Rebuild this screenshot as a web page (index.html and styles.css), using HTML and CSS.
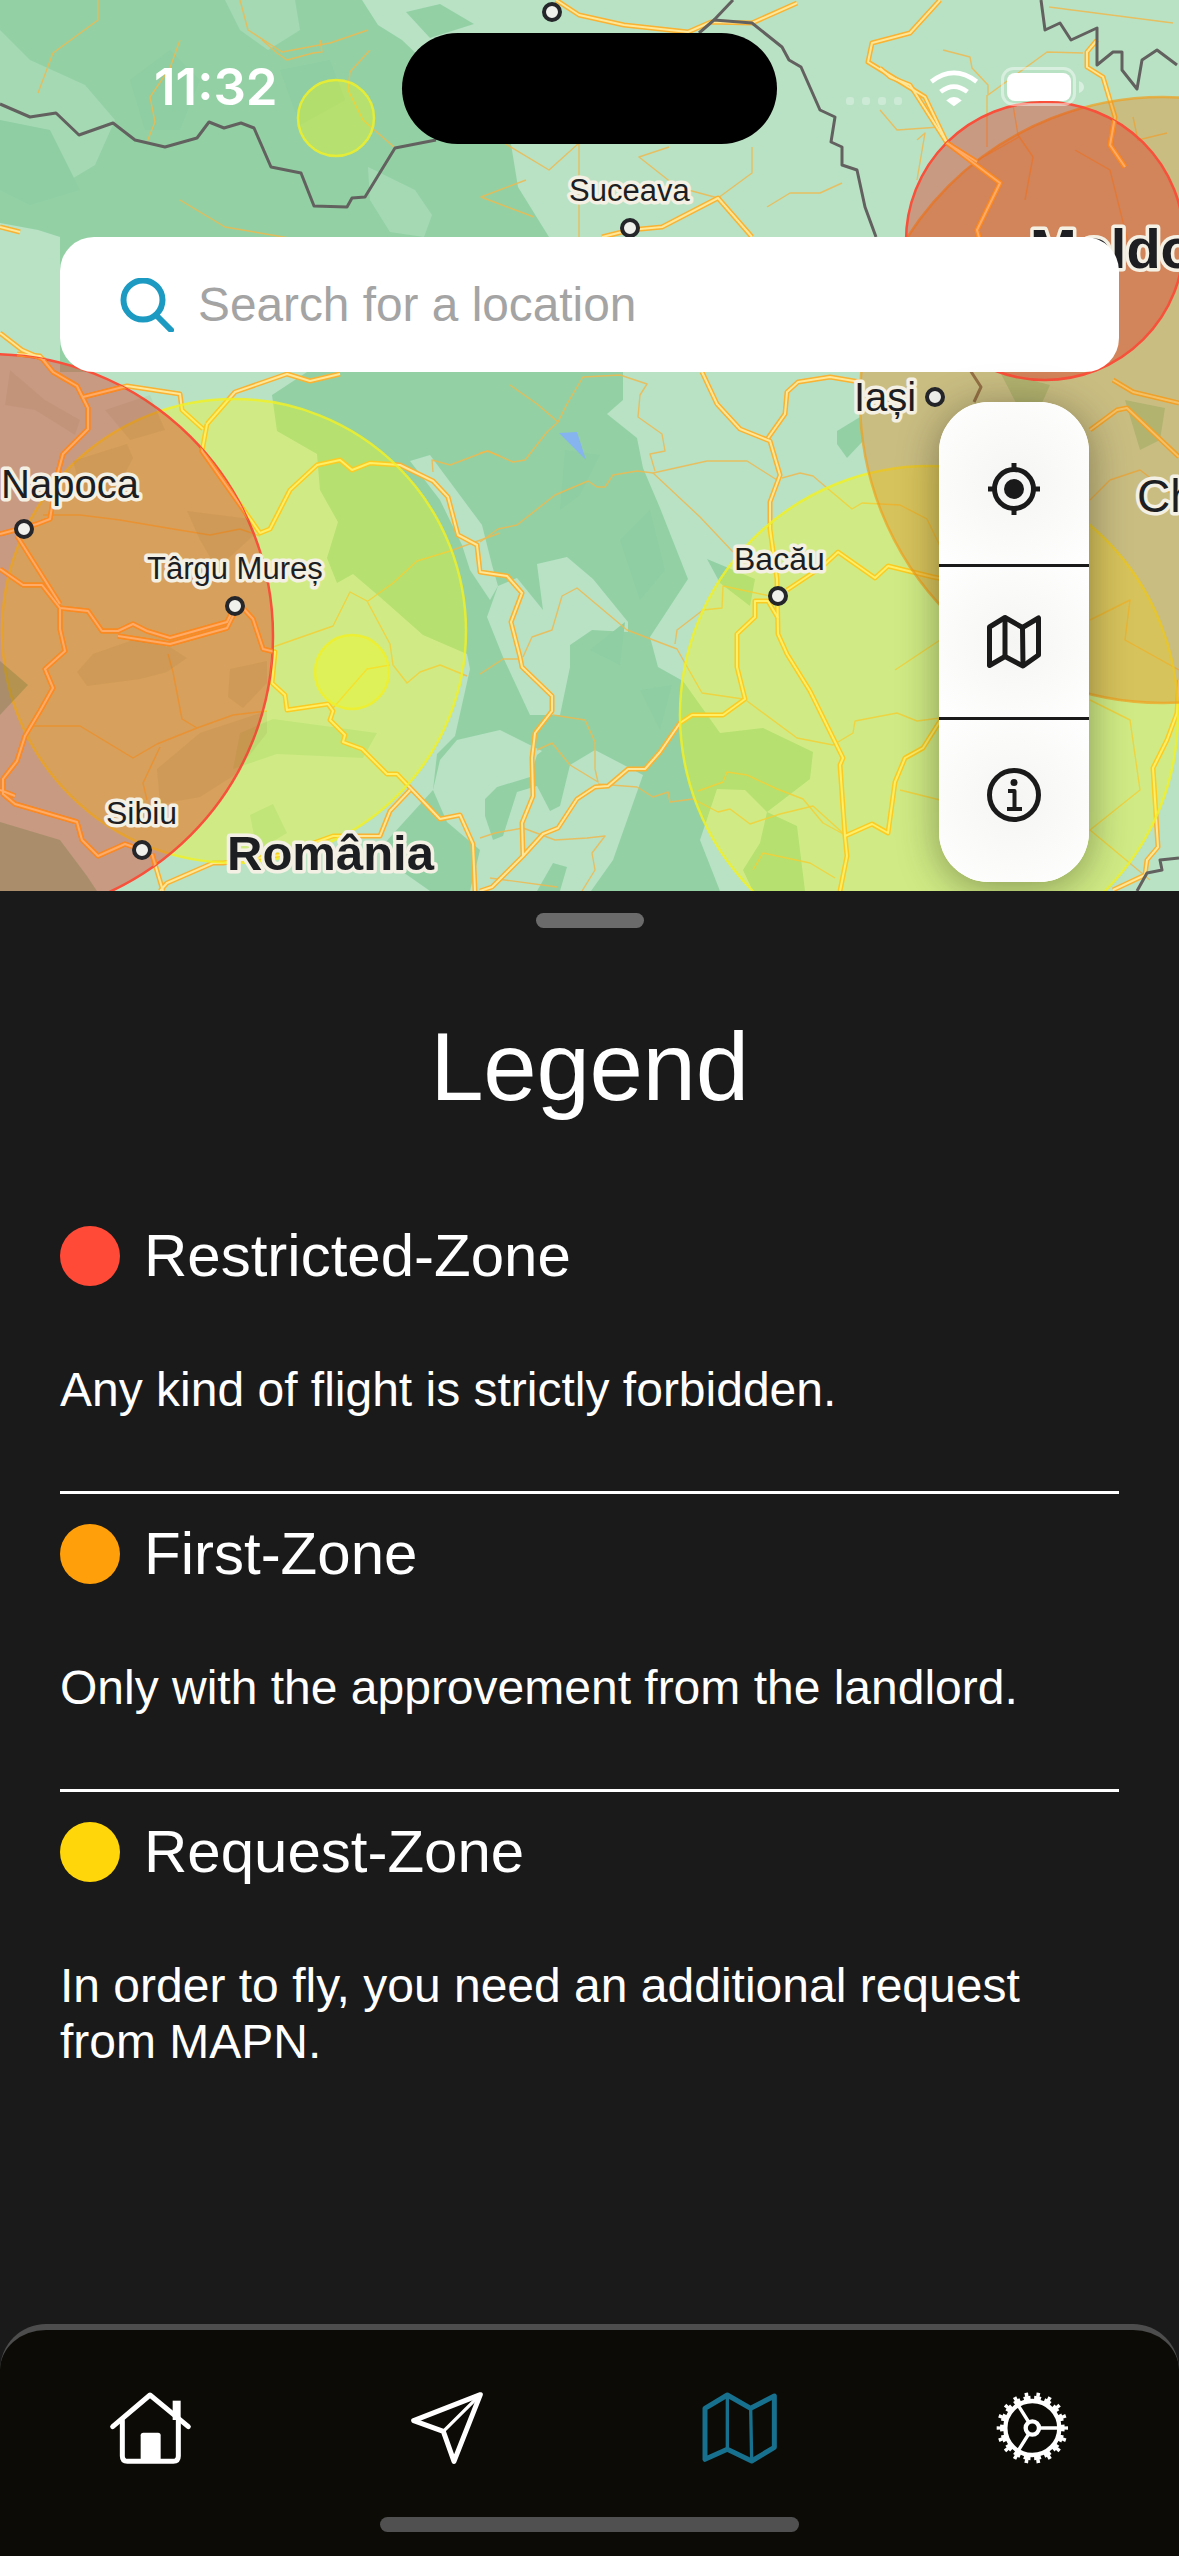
FILE: index.html
```html
<!DOCTYPE html>
<html lang="en">
<head>
<meta charset="utf-8">
<title>Legend</title>
<link rel="stylesheet" href="styles.css">
</head>
<body>
<div class="phone">
  <section class="map">
    <svg class="map-canvas" viewBox="0 0 1179 891" width="1179" height="891">
      <defs>
        <clipPath id="red-zones">
          <circle cx="-9" cy="636" r="282"/>
          <circle cx="1045" cy="241" r="139"/>
        </clipPath>
        <g id="majors">
          <polyline points="556,0 579,15 624,25 688,32 711,22 752,23 797,3"/>
          <polyline points="940,0 910,33 872,43 868,62 925,97 947,143 977,162"/>
          <polyline points="880,68 890,77 910,85 947,143 1000,183 977,230 985,260"/>
          <polyline points="1097,40 1087,52 1087,67 1103,77 1115,117 1110,145 1125,167"/>
          <polyline points="602,237 630,230 662,227 718,198 752,237"/>
          <polyline points="0,227 20,232"/>
          <polyline points="0,333 22,350 45,360"/>
          <polyline points="17,354 40,356 53,372 77,386 88,408 88,429 63,454 57,476 50,519 37,524 0,534"/>
          <polyline points="83,397 127,386 180,394 182,410 203,429"/>
          <polyline points="207,424 235,392 287,374 310,381 340,374"/>
          <polyline points="207,424 202,451 260,533 270,529 290,490 317,465 340,460 352,470 370,463 400,465 433,481 448,497 458,535 477,545 480,572 507,576 522,593 511,622 520,657 522,667 552,696 552,711 535,733 532,758 533,796 522,823 523,856 492,887 480,891"/>
          <polyline points="523,856 543,834 558,828 577,799 595,787 608,786 628,769 645,769 660,752 680,723 692,715 723,715 745,699 737,667 737,634 755,617 755,601 768,601 778,618"/>
          <polyline points="702,372 717,404 740,429 770,441 780,475 770,502 770,529 777,579 778,634 787,654 810,691 843,758 840,765 845,836 847,856 840,891"/>
          <polyline points="768,438 785,414 787,392 798,382 830,377 860,382"/>
          <polyline points="787,590 823,566 838,552 875,578 888,566 933,577 1000,590"/>
          <polyline points="845,836 872,824 888,833 895,782 905,758 923,748 940,721 1000,680"/>
          <polyline points="1090,430 1117,410 1127,408 1179,457"/>
          <polyline points="1113,380 1133,392 1179,403"/>
          <polyline points="1179,680 1177,713 1167,740 1153,768 1158,847 1147,860 1145,875 1113,890"/>
          <polyline points="0,569 23,585 42,585 60,608 88,611 102,631 118,631 133,624 147,631 170,638 227,622 235,606"/>
          <polyline points="118,636 170,644 227,628 235,612"/>
          <polyline points="60,608 60,629 65,651 45,669 53,688 40,711 25,736 17,761 3,779 3,794 15,804 77,822 82,840 98,856 125,844 142,850"/>
          <polyline points="0,790 15,796"/>
          <polyline points="17,536 60,604"/>
          <polyline points="243,608 253,619 263,649 275,652 272,683 285,695 287,710 328,704 333,711 330,720 345,735 343,742 362,749 387,774 397,774 440,819 460,815 473,844 475,891"/>
          <polyline points="410,790 390,811 380,836 333,836 280,855 223,863 213,863 167,883 160,891"/>
          <polyline points="152,854 163,891"/>
        </g>
      </defs>

      <rect class="land" width="1179" height="891"/>

      <polygon class="forest" points="0,0 362,0 378,25 402,40 511,144 518,187 549,237 600,300 623,372 623,400 607,414 637,438 643,468 660,508 688,579 650,637 658,667 683,681 720,733 763,728 813,752 810,779 767,812 797,826 805,891 430,891 400,870 383,845 433,790 437,754 455,736 470,669 467,654 423,635 380,597 353,574 337,583 327,558 338,522 320,490 317,454 277,431 272,395 307,372 60,372 60,237 38,230 0,223"/>
      <polygon class="land" points="410,461 430,455 482,525 492,565 498,586 490,600 470,570 462,545 440,500"/>
      <polygon class="land" points="537,564 567,557 593,579 628,622 628,632 592,630 570,645 570,667 560,715 530,715 503,657 487,617 498,586 517,578 543,610"/>
      <polygon class="land" points="457,740 500,730 530,745 570,765 595,750 643,775 613,860 591,891 470,891 480,850 447,822 433,790 440,760"/>
      <polygon class="land" points="717,789 745,790 767,812 760,843 743,870 753,891 720,891 700,840"/>
      <polygon class="forest" points="485,799 497,787 530,777 537,755 552,743 570,765 560,806 550,811 537,786 517,792 503,836 493,840 485,816"/>
      <polygon class="forest" points="537,891 553,863 567,867 560,891"/>
      <polygon class="forest" points="707,559 755,579 750,606 720,583"/>
      <polygon class="forest" points="837,431 860,417 863,441 847,458 837,444"/>
      <polygon class="forest" points="406,12 440,4 474,24 430,38"/>

      <polygon class="forest-light" points="0,30 30,60 85,85 115,120 95,165 45,195 25,170 0,150"/>
      <polygon class="forest-light" points="225,0 295,0 300,30 268,50 240,30"/>
      <polygon class="forest-light" points="368,167 415,190 432,215 424,237 390,232 370,200"/>
      <polygon class="forest-dark" points="130,80 170,50 200,80 180,130 145,130"/>
      <polygon class="forest-dark" points="280,70 330,60 345,100 300,125"/>
      <polygon class="forest-dark" points="0,120 50,130 80,190 30,205 0,190"/>
      <polygon class="forest-dark" points="590,650 625,622 620,665"/>
      <polygon class="forest-dark" points="620,540 650,510 665,570 640,600"/>
      <polygon class="forest-dark" points="565,450 600,455 580,495 560,510"/>
      <polygon class="forest-dark" points="640,690 672,685 660,730"/>
      <polygon class="forest-light" points="240,733 273,719 377,733 363,758 277,754 233,769"/>
      <polygon class="forest-light" points="250,815 273,804 287,833 257,851"/>
      <polygon class="forest" points="1000,372 1050,385 1030,430"/>
      <polygon class="forest" points="1125,400 1165,408 1160,440 1140,450"/>
      <polygon class="lake" points="559,433 577,432 586,460"/>

      <g class="minor">
        <polyline points="480,453 488,451 513,462 525,460 547,432 558,422 537,404 510,385"/>
        <polyline points="558,422 567,404 583,377 620,375 647,384 640,395 638,417 662,434 665,451 650,454 655,471"/>
        <polyline points="653,473 707,461 747,461 777,480"/>
        <polyline points="653,473 700,517 733,552"/>
        <polyline points="480,542 498,529 517,525 555,495 588,481 597,487 605,487 613,475 637,471 653,473"/>
        <polyline points="782,478 800,473 813,476 827,488 852,509 862,503 900,505 927,519 940,546"/>
        <polyline points="523,657 532,637 552,630 562,596 577,588 627,630 677,649 702,693 743,699"/>
        <polyline points="675,644 677,630 703,610 722,608 723,586 770,596"/>
        <polyline points="480,674 503,659 522,659"/>
        <polyline points="553,715 585,720 595,742 595,769 598,782 570,765 552,743 537,750"/>
        <polyline points="598,784 637,787 653,797 668,792 670,802 693,799 718,812 730,809 750,824 780,814 813,806 845,835"/>
        <polyline points="747,701 797,738 833,745 853,733 855,721 897,713 917,721 940,718"/>
        <polyline points="698,791 723,782 727,772 747,775 777,789 803,799 823,823 845,835"/>
        <polyline points="480,838 495,833 523,828 555,840 587,838 605,836 592,853 595,870 582,891"/>
        <polyline points="490,878 557,887"/>
        <polyline points="753,870 763,853 810,863 835,878"/>
        <polyline points="43,515 80,515 120,520 173,529 210,535 240,529 260,536"/>
        <polyline points="168,654 173,672 182,719 197,728 233,715 267,711"/>
        <polyline points="33,726 80,726 133,758 157,744 197,728"/>
        <polyline points="160,747 143,783 147,800"/>
        <polyline points="273,647 333,626 350,592 367,601 390,644 393,665 407,683 420,672 440,665 467,676"/>
        <polyline points="368,601 393,583 417,561 450,551 500,533"/>
        <polyline points="333,708 367,669 390,665"/>
        <polyline points="433,472 432,460 450,465 487,451 500,456"/>
        <polyline points="38,93 53,53 98,20 98,0"/>
        <polyline points="240,0 248,30 282,52 330,43 368,30"/>
        <polyline points="180,40 170,68 150,97 155,122 147,142"/>
        <polyline points="262,40 277,53 287,60 313,53 322,52 320,40"/>
        <polyline points="370,50 350,72 348,90 363,120 395,148"/>
        <polyline points="180,200 225,227 301,240"/>
        <polyline points="526,180 481,197 534,217"/>
        <polyline points="504,143 549,170 579,143 579,237"/>
        <polyline points="669,147 639,157 677,187 718,198 752,173 752,147"/>
        <polyline points="767,207 790,193 820,193 842,183"/>
        <polyline points="943,50 970,57 972,68 988,85 988,95 1047,52 1083,53"/>
        <polyline points="880,110 897,130 940,127"/>
        <polyline points="917,140 925,133 917,180"/>
        <polyline points="987,95 987,147"/>
        <polyline points="1013,105 1018,135 1033,157 1025,200"/>
        <polyline points="1019,137 978,160"/>
        <polyline points="1133,117 1138,140 1167,133"/>
        <polyline points="1049,7 1173,23"/>
        <polyline points="1075,150 1110,170 1130,250"/>
        <polyline points="1090,500 1110,480 1140,470 1179,500"/>
        <polyline points="1090,620 1130,600 1125,640 1179,670"/>
        <polyline points="1090,700 1130,720 1140,790 1090,830 1150,880"/>
        <polyline points="895,670 940,640"/>
        <polyline points="900,790 940,800"/>
      </g>

      <use href="#majors" class="road-casing"/>
      <use href="#majors" class="road-fill"/>

      <polyline class="border" points="0,104 30,117 56,113 79,135 113,123 135,140 165,147 197,138 209,122 224,128 241,123 254,128 271,167 301,173 314,206 347,207 352,198 365,197 395,148 436,140"/>
      <polyline class="border" points="699,33 714,20 752,23 782,47 789,60 801,67 820,110 835,117 831,142 842,147 842,165 857,170 865,207 876,237"/>
      <polyline class="border" points="714,20 733,0"/>
      <polyline class="border" points="970,370 981,387 974,402"/>
      <polyline class="border" points="1041,0 1045,30 1060,23 1071,40 1097,28 1097,65 1113,52 1122,52 1122,70 1137,89 1142,60 1157,50 1177,65"/>
      <polyline class="border" points="1137,891 1147,873 1162,870 1160,860 1179,858"/>

      <circle class="zone-yellow" cx="234" cy="631" r="232"/>
      <circle class="zone-yellow" cx="929" cy="715" r="249"/>
      <circle class="zone-yellow" cx="336" cy="118" r="38"/>
      <circle class="zone-yellow" cx="352" cy="672" r="37"/>
      <circle class="zone-orange" cx="1163" cy="400" r="303"/>
      <circle class="zone-red" cx="-9" cy="636" r="282"/>
      <circle class="zone-red" cx="1045" cy="241" r="139"/>

      <g clip-path="url(#red-zones)">
        <use href="#majors" class="road-hot"/>
        <use href="#majors" class="road-hot-core"/>
      </g>

      <polygon class="tint-strong" points="0,822 60,840 87,876 97,891 0,891"/>
      <polygon class="tint-strong" points="0,661 28,685 0,715"/>
      <polygon class="tint" points="10,370 45,400 80,420 75,435 35,410 5,405"/>
      <polygon class="tint" points="105,410 150,395 165,430 130,440"/>
      <polygon class="tint" points="73,461 127,444 133,458 113,497 83,497"/>
      <polygon class="tint" points="187,511 250,519 253,536 217,569 200,540"/>
      <polygon class="tint" points="77,672 93,654 133,640 170,647 187,658 167,672 140,679 87,686"/>
      <polygon class="tint" points="230,669 267,661 267,683 243,708 228,697"/>
      <polygon class="tint" points="157,769 200,733 267,711 267,733 233,776 200,797 160,804"/>

      <g class="pins">
        <circle cx="552" cy="12" r="8"/>
        <circle cx="630" cy="228" r="8"/>
        <circle cx="935" cy="397" r="8"/>
        <circle cx="24" cy="529" r="8"/>
        <circle cx="235" cy="606" r="8"/>
        <circle cx="142" cy="850" r="8"/>
        <circle cx="778" cy="596" r="8"/>
      </g>

      <text class="city" x="569" y="201">Suceava</text>
      <text class="city city-m" x="854" y="411">Iași</text>
      <text class="city city-m" x="1" y="498">Napoca</text>
      <text class="city" x="147" y="579">Târgu Mureș</text>
      <text class="city city-s" x="106" y="824">Sibiu</text>
      <text class="city city-s" x="734" y="570">Bacău</text>
      <text class="country" x="227" y="870">România</text>
      <text class="country country-l" x="1030" y="268">Moldova</text>
      <text class="city city-l" x="1137" y="512">Chișinău</text>
    </svg>

    <div class="time">11:32</div>
    <div class="island"></div>
    <div class="status-right">
      <svg class="signal" viewBox="0 0 56 8" width="56" height="8"><rect width="8" height="8" rx="3"/><rect x="16" width="8" height="8" rx="3"/><rect x="32" width="8" height="8" rx="3"/><rect x="48" width="8" height="8" rx="3"/></svg>
      <svg class="wifi" viewBox="135 85 160 115" width="53" height="38">
        <path class="wifi-arc" d="M145 123Q213 70 282 123"/>
        <path class="wifi-arc" d="M173 154Q213 122 254 154"/>
        <path class="wifi-dot" d="M190 180Q213 160 237 180L213 198Z"/>
      </svg>
      <svg class="battery" viewBox="0 0 84 40" width="84" height="40">
        <rect class="battery-case" x="1.5" y="1.5" width="72" height="36" rx="11"/>
        <rect class="battery-level" x="6" y="6" width="64" height="28" rx="8"/>
        <path class="battery-nub" d="M78 14q5 2 5 6t-5 6z"/>
      </svg>
    </div>

    <div class="search">
      <svg class="search-icon" viewBox="0 0 54 54" width="54" height="54">
        <circle cx="23" cy="22" r="19.5"/>
        <line x1="37" y1="38" x2="51" y2="52"/>
      </svg>
      <span class="search-text">Search for a location</span>
    </div>

    <div class="tools">
      <div class="tool tool-first">
        <svg class="tool-icon" viewBox="0 0 54 54" width="54" height="54">
          <circle cx="27" cy="27" r="19.5"/>
          <circle class="solid" cx="27" cy="27" r="10"/>
          <path d="M27 1v6M27 47v6M1 27h6M47 27h6"/>
        </svg>
      </div>
      <div class="tool">
        <svg class="tool-icon" viewBox="0 0 54 54" width="54" height="54">
          <path d="M2.500 12 18 2.500 35.500 12.500 51.500 3V40L36 51 18 41.500 2.500 50.500Z"/>
          <path d="M18 2.500V41.500M35.500 12.500 36 51"/>
        </svg>
      </div>
      <div class="tool tool-last">
        <svg class="tool-icon" viewBox="0 0 54 54" width="54" height="54">
          <circle cx="27" cy="27" r="24.500"/>
          <circle class="solid" cx="27" cy="14.500" r="3.500"/>
          <path class="thin" d="M21 23H27.500V40M20 41H35"/>
        </svg>
      </div>
    </div>
  </section>

  <section class="sheet">
    <div class="handle"></div>
    <h1 class="title">Legend</h1>
    <div class="zone">
      <div class="zone-head"><span class="dot dot-red"></span><h2 class="zone-name">Restricted-Zone</h2></div>
      <p class="zone-text">Any kind of flight is strictly forbidden.</p>
    </div>
    <div class="zone">
      <div class="zone-head"><span class="dot dot-orange"></span><h2 class="zone-name">First-Zone</h2></div>
      <p class="zone-text">Only with the approvement from the landlord.</p>
    </div>
    <div class="zone zone-last">
      <div class="zone-head"><span class="dot dot-yellow"></span><h2 class="zone-name">Request-Zone</h2></div>
      <p class="zone-text">In order to fly, you need an additional request from MAPN.</p>
    </div>

    <nav class="tabs">
      <div class="tab">
        <svg class="tab-icon" viewBox="36 57 270 240" width="90" height="80">
          <path d="M68 170 180 75 295 170"/>
          <path class="thick" d="M260 92V150"/>
          <path d="M97 152V258Q97 274 112 274H250Q265 274 265 258V150"/>
          <path class="fill" d="M152 196Q152 188 160 188H204Q212 188 212 196V272H152Z"/>
        </svg>
      </div>
      <div class="tab">
        <svg class="tab-icon" viewBox="921 57 270 240" width="90" height="80">
          <path d="M1171 74 971 152 1060 184 1092 274Z"/>
          <path class="thin" d="M1171 74 1060 184"/>
        </svg>
      </div>
      <div class="tab tab-active">
        <svg class="tab-icon" viewBox="36 57 270 240" width="90" height="80">
          <path d="M75 115 142 75 212 115 283 78V232L215 273 142 238 75 268Z"/>
          <path class="thin" d="M142 75V238M212 115 215 273"/>
        </svg>
      </div>
      <div class="tab">
        <svg class="tab-icon" viewBox="921 57 270 240" width="90" height="80">
          <circle class="teeth-base" cx="1057" cy="174" r="90" pathLength="360"/>
          <circle class="teeth-tip" cx="1057" cy="174" r="101" pathLength="360"/>
          <circle class="ring" cx="1057" cy="174" r="81"/>
          <circle class="ring" cx="1057" cy="174" r="20"/>
          <path class="thin" d="M1077 174H1140M1046 156 1011 100M1046 192 1012 246"/>
        </svg>
      </div>
    </nav>
    <div class="home-bar"></div>
  </section>
</div>
</body>
</html>
```

FILE: styles.css
```css
* { box-sizing: border-box; }

html, body { margin: 0; padding: 0; background: #1a1a1a; }

.phone {
  width: 1179px;
  height: 2556px;
  display: flex;
  flex-direction: column;
  overflow: hidden;
  font-family: "Liberation Sans", Arial, sans-serif;
  color: #fff;
}

/* map */
.map { position: relative; height: 891px; flex: none; overflow: hidden; }
.map-canvas { display: block; }

.land { fill: #b9e2c5; }
.forest { fill: #93d1a5; }
.forest-light { fill: #a5d9b4; }
.forest-dark { fill: #8ecea2; }
.lake { fill: #85b4ee; }
.tint { fill: rgba(110, 85, 30, 0.07); }
.tint-strong { fill: rgba(90, 110, 50, 0.28); }

.minor polyline { fill: none; stroke: #efb94f; stroke-width: 1.4; stroke-linejoin: round; opacity: 0.85; }
.road-casing { fill: none; stroke: #f9b232; stroke-width: 5; stroke-linejoin: round; }
.road-fill { fill: none; stroke: #ffe797; stroke-width: 2; stroke-linejoin: round; }
.road-hot { fill: none; stroke: #fb8a23; stroke-width: 5; stroke-linejoin: round; }
.road-hot-core { fill: none; stroke: #ffab68; stroke-width: 2; stroke-linejoin: round; }
.border { fill: none; stroke: #62615f; stroke-width: 3; stroke-linejoin: round; }

.zone-yellow { fill: rgba(255, 255, 0, 0.325); stroke: rgba(240, 240, 40, 0.85); stroke-width: 2.5; }
.zone-orange { fill: rgba(225, 134, 30, 0.4); stroke: rgba(240, 160, 30, 0.7); stroke-width: 2.5; }
.zone-red { fill: rgba(225, 48, 30, 0.4); stroke: #f8503a; stroke-width: 2.5; }

.pins circle { fill: #f0f0ec; stroke: #24262a; stroke-width: 4; }

.city, .country {
  font-family: "Liberation Sans", Arial, sans-serif;
  fill: #1c1e22;
  stroke: #f4f0e4;
  stroke-linejoin: round;
  paint-order: stroke;
}
.city { font-size: 31px; stroke-width: 7px; }
.city-s { font-size: 32px; }
.city-m { font-size: 40px; }
.city-l { font-size: 46px; }
.country { font-size: 49px; font-weight: 700; stroke-width: 7px; }
.country-l { font-size: 56px; }

/* status bar */
.time {
  position: absolute;
  left: 154px;
  top: 57px;
  font-family: Inter, "Liberation Sans", sans-serif;
  font-size: 51px;
  line-height: 60px;
  font-weight: 600;
  color: #fff;
}
.island {
  position: absolute;
  left: 402px;
  top: 33px;
  width: 375px;
  height: 111px;
  border-radius: 56px;
  background: #000;
}
.status-right {
  position: absolute;
  left: 846px;
  top: 67px;
  display: flex;
  align-items: flex-start;
}
.signal { fill: rgba(255, 255, 255, 0.28); margin-top: 30px; margin-right: 26px; }
.wifi { margin-right: 20px; margin-top: 2px; }
.wifi-arc { fill: none; stroke: #fff; stroke-width: 14; stroke-linecap: butt; }
.wifi-dot { fill: #fff; }
.battery-case { fill: none; stroke: rgba(255, 255, 255, 0.45); stroke-width: 3; }
.battery-level { fill: #fff; }
.battery-nub { fill: rgba(255, 255, 255, 0.45); }

/* search */
.search {
  position: absolute;
  left: 60px;
  top: 237px;
  width: 1059px;
  height: 135px;
  padding-left: 60px;
  display: flex;
  align-items: center;
  gap: 24px;
  background: #fff;
  border-radius: 34px;
}
.search-icon { fill: none; stroke: #1c9ac2; stroke-width: 6; stroke-linecap: round; }
.search-text { font-size: 47.800px; line-height: 56px; color: #a4a4a4; }

/* map tools */
.tools {
  position: absolute;
  left: 939px;
  top: 402px;
  z-index: 1;
  width: 150px;
  height: 480px;
  display: flex;
  flex-direction: column;
  border-radius: 50px;
  overflow: hidden;
  background: #fff;
}
.map::after {
  content: "";
  position: absolute;
  left: 939px;
  top: 402px;
  width: 150px;
  height: 480px;
  border-radius: 50px;
  box-shadow: 0 6px 40px rgba(20, 20, 10, 0.4);
  pointer-events: none;
}
.tool {
  flex: none;
  height: 150px;
  display: flex;
  align-items: center;
  justify-content: center;
  background: radial-gradient(circle, #f5f5f3 0, #fbfbfa 60%, #fff 100%);
}
.tool + .tool { border-top: 3px solid #1a1a1a; height: 153px; }
.tool-first { height: 162px; padding-top: 12px; }
.tool + .tool-last { height: 165px; padding-bottom: 13px; }
.tool-icon { fill: none; stroke: #1a1a1a; stroke-width: 5; stroke-linejoin: round; }
.tool-icon .solid { fill: #1a1a1a; stroke: none; }
.tool-icon .thin { stroke-width: 4; }

/* sheet */
.sheet {
  flex: 1;
  position: relative;
  display: flex;
  flex-direction: column;
  background: #1a1a1a;
  padding-top: 22px;
}
.handle {
  align-self: center;
  width: 108px;
  height: 15px;
  border-radius: 8px;
  background: #6b6b6b;
}
.title {
  margin: 84px 0 74px;
  font-size: 96px;
  line-height: 110px;
  font-weight: 400;
  letter-spacing: -0.3px;
  text-align: center;
}
.zone {
  margin: 0 60px;
  padding: 30px 0 73px;
  border-bottom: 3px solid #fff;
}
.zone-last { border-bottom: 0; }
.zone-head { display: flex; align-items: center; gap: 24px; height: 60px; }
.dot { width: 60px; height: 60px; border-radius: 50%; flex: none; }
.dot-red { background: #ff4a37; }
.dot-orange { background: #ff9f0a; }
.dot-yellow { background: #ffd60a; }
.zone-name { margin: 0; font-size: 60px; line-height: 60px; font-weight: 400; }
.zone-text { margin: 76px 0 0; font-size: 48px; line-height: 56px; }

/* tabs */
.tabs {
  position: absolute;
  left: 0;
  right: 0;
  bottom: 0;
  height: 232px;
  padding-top: 59px;
  display: flex;
  background: #0c0b06;
  border-top: 6px solid #4d4d4d;
  border-radius: 46px 46px 0 0;
}
.tab { flex: 1; display: flex; justify-content: center; align-items: flex-start; color: #fff; }
.tab-active { color: #17708d; }
.tab-icon { fill: none; stroke: currentColor; stroke-width: 15; stroke-linecap: round; stroke-linejoin: round; }
.tab-icon .thin { stroke-width: 10; }
.tab-icon .ring { stroke-width: 13; }
.tab-icon .thick { stroke-width: 24; stroke-linecap: butt; }
.tab-icon .fill { fill: currentColor; stroke: none; }
.tab-icon .teeth-base { stroke-width: 14; stroke-linecap: butt; stroke-dasharray: 13 7; stroke-dashoffset: 6.500; }
.tab-icon .teeth-tip { stroke-width: 12; stroke-linecap: butt; stroke-dasharray: 6 14; stroke-dashoffset: 3; }
.home-bar {
  position: absolute;
  left: 380px;
  bottom: 24px;
  width: 419px;
  height: 15px;
  border-radius: 8px;
  background: #505050;
}
```
